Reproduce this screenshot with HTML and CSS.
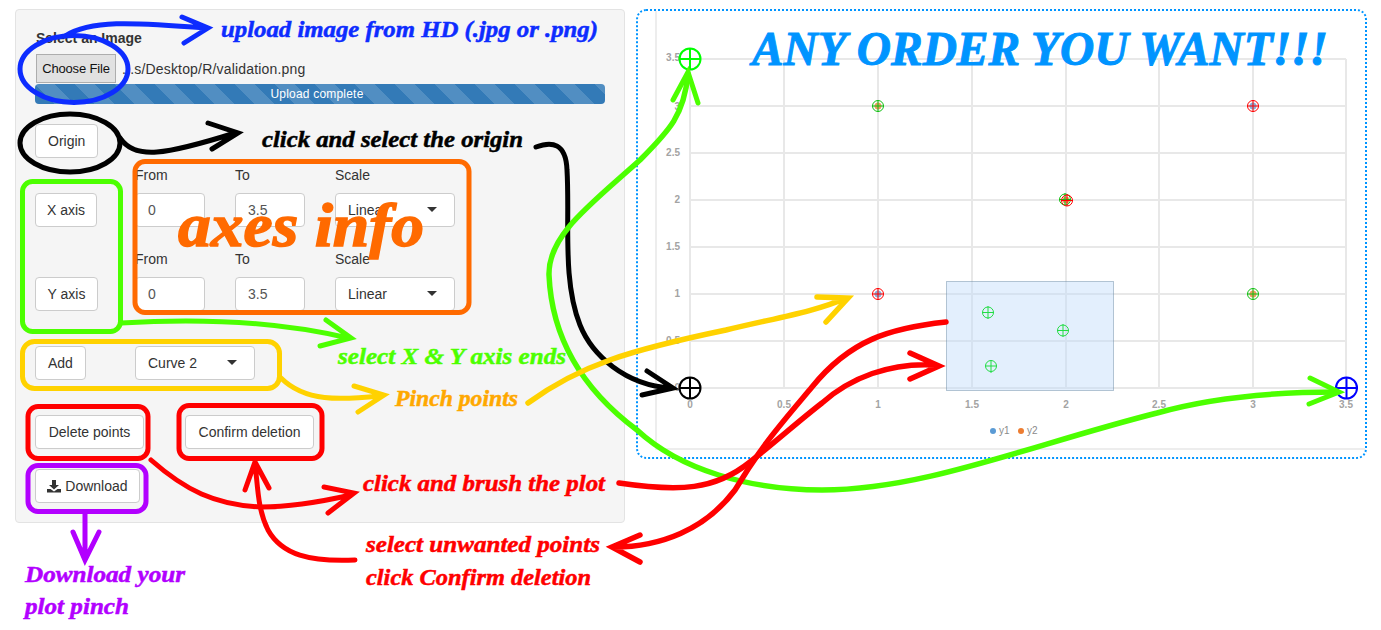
FILE: index.html
```html
<!DOCTYPE html>
<html lang="en">
<head>
<meta charset="utf-8">
<title>Plot pinch</title>
<link rel="stylesheet" href="styles.css">
</head>
<body>
<div class="page">
  <section class="panel">
    <div class="label-strong">Select an Image</div>
    <div class="file-row">
      <span class="file-btn">Choose File</span>
      <span class="file-name">...s/Desktop/R/validation.png</span>
    </div>
    <div class="progress">Upload complete</div>
    <button class="btn origin">Origin</button>
    <div class="axis-grid">
      <div class="axis-btn"><button class="btn btn-x">X axis</button></div>
      <div class="field"><span class="field-label">From</span><input class="input" value="0"></div>
      <div class="field"><span class="field-label">To</span><input class="input" value="3.5"></div>
      <div class="field"><span class="field-label">Scale</span><div class="select">Linear<i class="caret"></i></div></div>
      <div class="axis-btn"><button class="btn btn-y">Y axis</button></div>
      <div class="field"><span class="field-label">From</span><input class="input" value="0"></div>
      <div class="field"><span class="field-label">To</span><input class="input" value="3.5"></div>
      <div class="field"><span class="field-label">Scale</span><div class="select">Linear<i class="caret"></i></div></div>
    </div>
    <div class="add-row">
      <button class="btn">Add</button>
      <div class="select">Curve 2<i class="caret"></i></div>
    </div>
    <div class="delete-row">
      <button class="btn btn-delete">Delete points</button>
      <button class="btn btn-confirm">Confirm deletion</button>
    </div>
    <button class="btn download">
      <svg class="dl-icon" viewBox="0 0 14 14" width="14" height="14"><path d="M5 1h4v5h3L7 10.500 2 6h3zM0 10h3.500L7 12.500 10.500 10H14v3.500H0z"/></svg>
      Download
    </button>
  </section>

  <section class="plot">
    <svg class="chart" viewBox="638 11 727 446" width="727" height="446">
      <g class="frame">
        <path d="M656 11V449H1365"/>
      </g>
      <g class="grid">
        <path d="M690 59H1346M690 106H1346M690 153H1346M690 200H1346M690 247H1346M690 294H1346M690 341H1346M690 388H1346"/>
        <path d="M690 59V388M784 59V388M878 59V388M972 59V388M1066 59V388M1159 59V388M1253 59V388M1346 59V388"/>
      </g>
      <g class="tick tick-y">
        <text x="680" y="61">3.5</text><text x="680" y="110">3</text><text x="680" y="156">2.5</text><text x="680" y="203">2</text>
        <text x="680" y="250">1.5</text><text x="680" y="297">1</text><text x="680" y="344">0.5</text><text x="680" y="391">0</text>
      </g>
      <g class="tick tick-x">
        <text x="690" y="408">0</text><text x="784" y="408">0.5</text><text x="878" y="408">1</text><text x="972" y="408">1.5</text>
        <text x="1066" y="408">2</text><text x="1159" y="408">2.5</text><text x="1253" y="408">3</text><text x="1346" y="408">3.5</text>
      </g>
      <g class="dots-orange">
        <circle cx="878" cy="106" r="3.500"/><circle cx="1066" cy="200" r="3.500"/><circle cx="1253" cy="294" r="3.500"/>
      </g>
      <g class="dots-blue">
        <circle cx="1253" cy="106" r="3.500"/><circle cx="878" cy="294" r="3.500"/>
      </g>
      <rect class="brush" x="946.500" y="281.500" width="167" height="109"/>
      <g class="legend">
        <circle class="leg-blue" cx="993" cy="431" r="3"/><text x="999" y="434">y1</text>
        <circle class="leg-orange" cx="1021" cy="431" r="3"/><text x="1027" y="434">y2</text>
      </g>
      <g class="mark mark-green">
        <circle cx="878" cy="106" r="5.500"/><path d="M872 106h12M878 100v12"/>
        <circle cx="1253" cy="294" r="5.500"/><path d="M1247 294h12M1253 288v12"/>
        <circle cx="1065" cy="199.500" r="5.500"/><path d="M1059 199.500h12M1065 193v12"/>
      </g>
      <g class="mark mark-red">
        <circle cx="1253" cy="106" r="5.500"/><path d="M1247 106h12M1253 100v12"/>
        <circle cx="878" cy="294" r="5.500"/><path d="M872 294h12M878 288v12"/>
        <circle cx="1067" cy="200.500" r="5.500"/><path d="M1061 200.500h12M1067 194v12"/>
      </g>
      <g class="mark mark-lime">
        <circle cx="988" cy="312.500" r="5.500"/><path d="M982 312.500h12M988 306v13"/>
        <circle cx="1063" cy="330.500" r="5.500"/><path d="M1057 330.500h12M1063 324v13"/>
        <circle cx="991" cy="366" r="5.500"/><path d="M985 366h12M991 360v13"/>
      </g>
      <g class="big big-green"><circle cx="690" cy="59" r="10.500"/><path d="M679 59h22M690 48v22"/></g>
      <g class="big big-black"><circle cx="690" cy="388" r="10.500"/><path d="M679 388h22M690 377v22"/></g>
      <g class="big big-blue"><circle cx="1346.500" cy="388" r="10.500"/><path d="M1336 388h22M1346.500 377v22"/></g>
    </svg>
  </section>
</div>

<svg class="notes" viewBox="0 0 1381 630" width="1381" height="630">
  <g class="ink ink-blue">
    <ellipse cx="74" cy="69" rx="54" ry="33.500"/>
    <path d="M65 36C90 20 130 22 206 28M182 17L208 28L184 43"/>
  </g>
  <g class="ink ink-black">
    <ellipse cx="70" cy="143" rx="50" ry="29"/>
    <path d="M120 138C135 160 165 155 235 133M208 123L238 133L212 149"/>
    <path d="M536 147C552 141 566 143 567 170C570 220 562 280 580 325C592 355 625 385 671 388M647 371L673 388L642 395"/>
  </g>
  <g class="ink ink-green">
    <rect x="22.500" y="181.500" width="98" height="150" rx="10"/>
    <path d="M121 323C200 318 280 322 348 338M326 320L351 338L320 346"/>
    <path class="ink-wide" d="M688 74C684 115 670 130 640 160C590 205 548 235 549 275C552 345 590 395 637 430C680 470 750 490 822 490C925 490 1030 445 1157 413C1210 398 1270 392 1337 392"/>
    <path d="M673 100L688 72L698 103M1310 378L1339 392L1309 404"/>
  </g>
  <rect class="ink ink-orange" x="135" y="161.500" width="334" height="151" rx="10"/>
  <g class="ink ink-yellow">
    <rect x="22.500" y="341.500" width="257" height="47" rx="12"/>
    <path d="M281 378C305 402 340 400 380 396M354 386L384 395L358 412"/>
    <path class="ink-wide" d="M528 403C580 365 630 350 726 330C775 318 815 312 846 298M817 297L848 298L826 322"/>
  </g>
  <g class="ink ink-red">
    <rect x="28" y="406.500" width="120" height="52" rx="10"/>
    <rect x="179" y="405.500" width="143" height="53" rx="10"/>
    <path d="M151 460C185 490 215 505 261 507C290 507 320 502 351 495M324 487L354 493L328 513"/>
    <path d="M355 560C310 562 282 555 268 530C258 510 258 490 255 463M245 490L255 462L269 488"/>
    <path class="ink-wide" d="M946 322C890 328 850 340 812 387C780 425 762 445 735 490C705 530 660 547 614 547M640 535L612 547L640 562"/>
    <path class="ink-wide" d="M619 483C680 492 715 490 750 462C780 438 800 420 822 403C850 378 890 362 936 365M910 353L939 366L910 379"/>
  </g>
  <g class="ink ink-purple">
    <rect x="28" y="465.500" width="118" height="46" rx="10"/>
    <path d="M85 512V558M73 532L85 560L99 532"/>
  </g>
  <text class="note t-blue" x="221" y="37" textLength="377" lengthAdjust="spacingAndGlyphs">upload image from HD (.jpg or .png)</text>
  <text class="note t-black" x="262" y="147" textLength="261" lengthAdjust="spacingAndGlyphs">click and select the origin</text>
  <text class="note t-axes" x="178" y="246" textLength="246" lengthAdjust="spacingAndGlyphs">axes info</text>
  <text class="note t-green" x="338" y="364" textLength="228" lengthAdjust="spacingAndGlyphs">select X &amp; Y axis ends</text>
  <text class="note t-amber" x="395" y="406" textLength="123" lengthAdjust="spacingAndGlyphs">Pinch points</text>
  <text class="note t-red" x="363" y="491" textLength="242" lengthAdjust="spacingAndGlyphs">click and brush the plot</text>
  <text class="note t-red" x="366" y="552" textLength="234" lengthAdjust="spacingAndGlyphs">select unwanted points</text>
  <text class="note t-red" x="366" y="585" textLength="225" lengthAdjust="spacingAndGlyphs">click Confirm deletion</text>
  <text class="note t-purple" x="25" y="582" textLength="160" lengthAdjust="spacingAndGlyphs">Download your</text>
  <text class="note t-purple" x="25" y="614" textLength="104" lengthAdjust="spacingAndGlyphs">plot pinch</text>
  <text class="note t-sky" x="752" y="65" textLength="576" lengthAdjust="spacingAndGlyphs">ANY ORDER YOU WANT!!!</text>
</svg>
</body>
</html>
```
FILE: styles.css
```css
* { box-sizing: border-box; }
html, body { margin: 0; height: 630px; overflow: hidden; background: #fff; }
body { font: 14px/20px "Liberation Sans", Arial, sans-serif; color: #333; position: relative; }

.page { display: flex; align-items: flex-start; padding: 9px 0 0 15px; }

.panel {
  width: 610px; height: 514px; padding: 18px 19px;
  background: #f5f5f5; border: 1px solid #e3e3e3; border-radius: 4px;
}
.label-strong { font-weight: 700; height: 20px; margin-bottom: 6px; padding-left: 1px; }
.file-row { display: flex; align-items: center; height: 29px; gap: 6px; padding-left: 1px; }
.file-btn {
  width: 80px; height: 29px; line-height: 27px; text-align: center;
  font-size: 13px; letter-spacing: -.15px;
  background: #e1e1e1; border: 1px solid #adadad; color: #111;
}
.file-name { letter-spacing: .18px; }
.progress {
  margin-top: 1px; width: 570px; height: 20px; border-radius: 4px;
  text-align: center; font-size: 12px; letter-spacing: .2px; color: #fff; padding-right: 6px;
  background-color: #337ab7;
  background-image: linear-gradient(45deg, rgba(255,255,255,.15) 25%, transparent 25%, transparent 50%, rgba(255,255,255,.15) 50%, rgba(255,255,255,.15) 75%, transparent 75%, transparent);
  background-size: 40px 40px;
}
.btn {
  display: inline-block; height: 34px; padding: 6px 12px;
  font: inherit; color: #333; background: #fff;
  border: 1px solid #ccc; border-radius: 4px;
}
.origin { display: block; margin-top: 20px; }
.btn-x { width: 62px; padding: 6px 0; }
.btn-y { width: 63px; padding: 6px 0; }
.btn-delete { width: 109px; padding: 6px 0; }
.btn-confirm { width: 129px; padding: 6px 0; }
.axis-grid {
  display: grid; grid-template-columns: 100px 100px 100px 120px;
  row-gap: 22px; margin-top: 7px;
}
.axis-btn { display: flex; align-items: flex-end; }
.field { display: flex; flex-direction: column; gap: 8px; }
.field-label { height: 20px; }
.input {
  width: 70px; height: 34px; padding: 6px 12px;
  font: inherit; color: #555; background: #fff;
  border: 1px solid #ccc; border-radius: 4px;
}
.select {
  display: flex; align-items: center; justify-content: space-between;
  width: 120px; height: 34px; padding: 0 17px 0 12px;
  background: #fff; border: 1px solid #ccc; border-radius: 4px;
}
.caret {
  width: 0; height: 0; margin-top: -2px;
  border-left: 5px solid transparent; border-right: 5px solid transparent; border-top: 5px solid #333;
}
.add-row { display: grid; grid-template-columns: 100px 120px; margin-top: 35px; justify-items: start; }
.delete-row { display: flex; gap: 41px; margin-top: 35px; }
.download { display: block; width: 105px; padding: 6px 0; margin-top: 20px; white-space: nowrap; }
.dl-icon { fill: #333; vertical-align: -2px; }

.plot {
  position: relative; width: 731px; height: 450px; margin-left: 11px;
  border: 2px dotted #0094ff; border-radius: 10px; background: #fff;
}
.chart { display: block; }
.frame path { fill: none; stroke: #e8e8e8; stroke-width: 1.5; }
.grid path { fill: none; stroke: #e8e8e8; stroke-width: 2; }
.tick text { font: 700 10px "Liberation Sans", Arial, sans-serif; fill: #a3a3a3; }
.tick-y text { text-anchor: end; }
.tick-x text { text-anchor: middle; }
.dots-orange { fill: #ed9a5f; }
.dots-blue { fill: #86aed8; }
.brush { fill: rgba(190, 218, 250, .43); stroke: rgba(100, 130, 160, .45); stroke-width: 1; }
.legend text { font: 10px "Liberation Sans", Arial, sans-serif; fill: #8a8a8a; }
.leg-blue { fill: #5b9bd5; }
.leg-orange { fill: #ed7d31; }
.mark circle, .mark path, .big circle, .big path { fill: none; }
.mark-green { stroke: #10c010; stroke-width: 1; }
.mark-red { stroke: #ff0000; stroke-width: 1; }
.mark-lime { stroke: #22dd44; stroke-width: 1; }
.big { stroke-width: 2; }
.big-green { stroke: #00ff00; }
.big-black { stroke: #000; }
.big-blue { stroke: #0000ff; }

.notes { position: absolute; left: 0; top: 0; pointer-events: none; }
.ink { fill: none; stroke-width: 5; stroke-linecap: round; stroke-linejoin: miter; }
.ink-wide { stroke-width: 5.5; }
.ink-blue { stroke: #0d2cff; }
.ink-black { stroke: #000; }
.ink-green { stroke: #4cff00; }
.ink-orange { stroke: #ff6a00; }
.ink-yellow { stroke: #ffd200; }
.ink-red { stroke: #ff0000; }
.ink-purple { stroke: #b200ff; }

.note { font-family: "Liberation Serif", "Times New Roman", serif; font-weight: 700; font-style: italic; font-size: 23px; stroke-width: .5; }
.t-blue { fill: #0d2cff; stroke: #0d2cff; }
.t-black { fill: #000; stroke: #000; }
.t-axes { fill: #ff6a00; stroke: #ff6a00; font-size: 62px; stroke-width: 1.5; }
.t-green { fill: #4cff00; stroke: #4cff00; }
.t-amber { fill: #ffa800; stroke: #ffa800; }
.t-red { fill: #ff0000; stroke: #ff0000; }
.t-purple { fill: #b200ff; stroke: #b200ff; }
.t-sky { fill: #0094ff; stroke: #0094ff; font-size: 48px; stroke-width: 1; }
```
